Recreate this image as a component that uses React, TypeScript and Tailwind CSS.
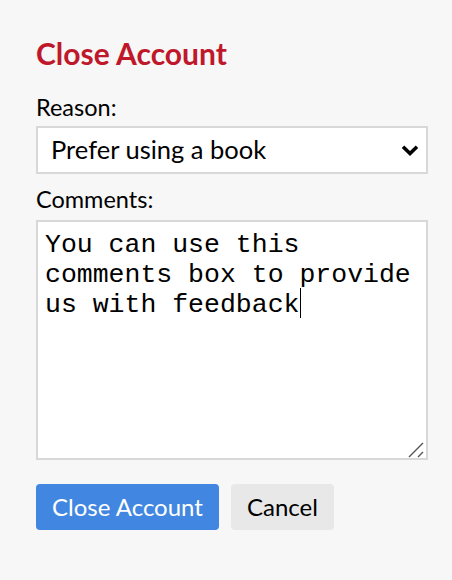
import React from 'react';

const reasons = [
  "Prefer using a book",
  "Too expensive",
  "Missing features",
  "Other",
];

const comment = "You can use this comments box to provide us with feedback";

const App = () => {
  return (
    <div className="min-h-[580px] w-[452px] bg-[#f7f7f7] pl-9 pr-6 pt-[35px] font-['Lato',sans-serif] text-black">
      <h1 className="text-[30px] font-bold leading-[36px] text-[#c0182b]">Close Account</h1>

      <label className="mt-[22px] mb-[5px] block text-[23.5px] leading-[28px]">Reason:</label>
      <div className="relative">
        <select
          defaultValue={reasons[0]}
          className="h-[48px] w-full appearance-none rounded-none border-2 border-[#d8d8d8] bg-white pl-[13px] pb-[2px] text-[25.5px] text-black outline-none"
        >
          {reasons.map((r) => (
            <option key={r} value={r}>{r}</option>
          ))}
        </select>
        <svg
          className="pointer-events-none absolute right-[9px] top-[19px]"
          width="18"
          height="11"
          viewBox="0 0 18 11"
        >
          <path d="M2 1.8 L9 8.5 L16 1.8" fill="none" stroke="black" strokeWidth="3.6" />
        </svg>
      </div>

      <label className="mt-[11px] mb-[7px] block text-[23.5px] leading-[28px]">Comments:</label>
      <div className="relative">
        <textarea
          defaultValue={comment}
          className="block h-[240px] w-full resize-none border-2 border-[#d8d8d8] bg-white px-[7px] pt-[8px] font-['Liberation_Mono',monospace] text-[26.5px] leading-[30px] text-black outline-none"
        />
        {/* caret after "feedback" */}
        <span className="pointer-events-none absolute left-[264px] top-[68px] h-[30px] w-px bg-black" />
        {/* resize grip */}
        <svg
          className="pointer-events-none absolute bottom-[2px] right-[3px]"
          width="17"
          height="16"
          viewBox="0 0 17 16"
        >
          <path d="M1 15 L15 1 M10 15 L15 10" stroke="#555" strokeWidth="1.4" />
        </svg>
      </div>

      <div className="mt-[24px] flex gap-3">
        <button className="h-[46px] rounded-[4px] bg-[#4187e2] px-[16px] text-[24px] text-white">Close Account</button>
        <button className="h-[46px] rounded-[4px] bg-[#e8e8e8] px-[16px] text-[24px] text-black">Cancel</button>
      </div>
    </div>
  );
};

export default App;
